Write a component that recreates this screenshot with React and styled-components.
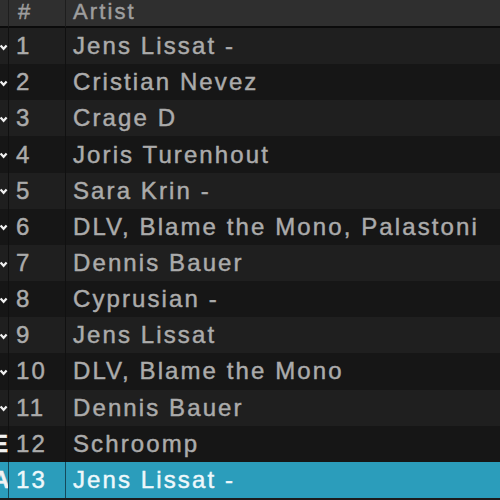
import React from 'react';
import styled, { createGlobalStyle } from 'styled-components';

const tracks = [
  { n: 1, artist: 'Jens Lissat -', mark: 'chev' },
  { n: 2, artist: 'Cristian Nevez', mark: 'chev' },
  { n: 3, artist: 'Crage D', mark: 'chev' },
  { n: 4, artist: 'Joris Turenhout', mark: 'chev' },
  { n: 5, artist: 'Sara Krin -', mark: 'chev' },
  { n: 6, artist: 'DLV, Blame the Mono, Palastoni', mark: 'chev' },
  { n: 7, artist: 'Dennis Bauer', mark: 'chev' },
  { n: 8, artist: 'Cyprusian -', mark: 'chev' },
  { n: 9, artist: 'Jens Lissat', mark: 'chev' },
  { n: 10, artist: 'DLV, Blame the Mono', mark: 'chev' },
  { n: 11, artist: 'Dennis Bauer', mark: 'chev' },
  { n: 12, artist: 'Schroomp', mark: 'E' },
  { n: 13, artist: 'Jens Lissat -', mark: 'A', selected: true },
];

const Global = createGlobalStyle`
  html, body {
    margin: 0;
    padding: 0;
    background: #1c1c1c;
    overflow: hidden;
  }
`;

const Table = styled.div`
  width: 500px;
  height: 500px;
  display: grid;
  grid-template-columns: 9px 57px 1fr;
  grid-template-rows: 28px repeat(13, 36.17px);
  font-family: 'Liberation Sans', Arial, sans-serif;
  letter-spacing: 2.1px;
  -webkit-text-stroke: 0.45px currentColor;
  background: #1c1c1c;
  overflow: hidden;
`;

const Head = styled.div`
  box-sizing: border-box;
  background: #2f2f2f;
  color: #9e9e9e;
  font-size: 22px;
  display: flex;
  align-items: center;
  padding-left: ${(p) => p.$pad || 0}px;
  border-bottom: 2px solid #0b0b0b;
  border-right: ${(p) => (p.$last ? 'none' : '1px solid #1e1e1e')};
  line-height: 1;
  padding-bottom: 3px;
`;

const Cell = styled.div`
  display: flex;
  align-items: center;
  font-size: 24px;
  white-space: nowrap;
  overflow: hidden;
  padding-left: ${(p) => p.$pad || 0}px;
  background: ${(p) => (p.$sel ? '#2b9dbb' : p.$odd ? '#1f1f1f' : '#161616')};
  color: ${(p) => (p.$sel ? '#eef8fb' : '#ababab')};
  border-right: ${(p) => (p.$last ? 'none' : `1px solid ${p.$sel ? '#15495a' : '#101010'}`)};
`;

const Mark = styled.span`
  color: #f2f2f2;
  font-weight: bold;
  font-size: 24px;
  letter-spacing: 0;
  margin-left: -8px;
`;

const Chevron = () => (
  <svg width="8" height="7" viewBox="0 0 8 7" style={{ marginTop: 2, flex: 'none' }}>
    <path d="M0.6 1.4 L3.6 4.8 L6.6 1.4" fill="none" stroke="#f0f0f0" strokeWidth="2.2" />
  </svg>
);

export default function App() {
  return (
    <>
      <Global />
      <Table>
        <Head />
        <Head $pad={9}>#</Head>
        <Head $pad={7} $last>Artist</Head>
        {tracks.map((t, i) => {
          const odd = i % 2 === 0;
          return (
            <React.Fragment key={t.n}>
              <Cell $odd={odd} $sel={t.selected}>
                {t.mark === 'chev' ? <Chevron /> : <Mark>{t.mark}</Mark>}
              </Cell>
              <Cell $odd={odd} $sel={t.selected} $pad={7}>{t.n}</Cell>
              <Cell $odd={odd} $sel={t.selected} $pad={7} $last>{t.artist}</Cell>
            </React.Fragment>
          );
        })}
      </Table>
    </>
  );
}
